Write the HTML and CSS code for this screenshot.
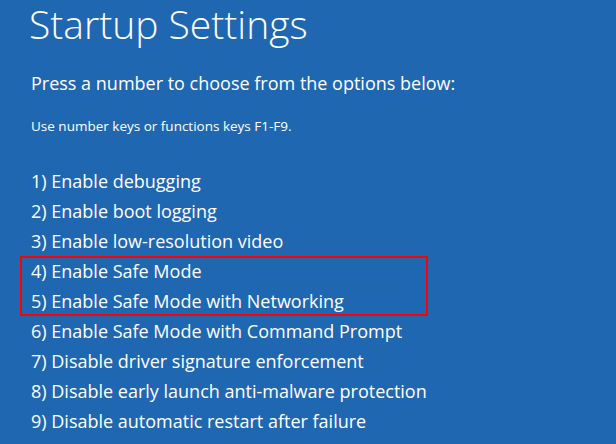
FILE: index.html
```html
<!DOCTYPE html>
<html lang="en">
<head>
<meta charset="utf-8">
<title>Startup Settings</title>
<link rel="stylesheet" href="styles.css">
</head>
<body>
<main class="screen">
  <h1 class="title">Startup Settings</h1>
  <p class="prompt">Press a number to choose from the options below:</p>
  <p class="hint">Use number keys or functions keys F1-F9.</p>
  <ol class="options">
    <li class="option">1) Enable debugging</li>
    <li class="option">2) Enable boot logging</li>
    <li class="option">3) Enable low-resolution video</li>
    <li class="group">
      <div class="option">4) Enable Safe Mode</div>
      <div class="option">5) Enable Safe Mode with Networking</div>
    </li>
    <li class="option">6) Enable Safe Mode with Command Prompt</li>
    <li class="option">7) Disable driver signature enforcement</li>
    <li class="option">8) Disable early launch anti-malware protection</li>
    <li class="option">9) Disable automatic restart after failure</li>
  </ol>
</main>
</body>
</html>
```

FILE: styles.css
```css
html, body {
  margin: 0;
  padding: 0;
  height: 100%;
  background: #2067b2;
}

.screen {
  font-family: "Open Sans", "Noto Sans", "DejaVu Sans", sans-serif;
  color: #ffffff;
  padding: 0 0 0 31px;
  display: flex;
  flex-direction: column;
}

.title {
  margin: 0;
  padding-top: 2px;
  font-size: 39px;
  font-weight: 300;
  line-height: 44px;
  margin-left: -2px;
}

.prompt {
  margin: 24px 0 0 0;
  font-size: 18px;
  font-weight: 400;
  line-height: 26px;
}

.hint {
  margin: 21px 0 0 0;
  font-size: 13.5px;
  line-height: 18px;
}

.options {
  list-style: none;
  margin: 31px 0 0 0;
  padding: 0;
  font-size: 18px;
  line-height: 30px;
}

.option {
  height: 30px;
  white-space: nowrap;
}

.group {
  margin-left: -11px;
  padding-left: 11px;
  width: 408px;
  box-sizing: border-box;
  box-shadow: inset 0 0 0 2px #ff0000;
}
```
